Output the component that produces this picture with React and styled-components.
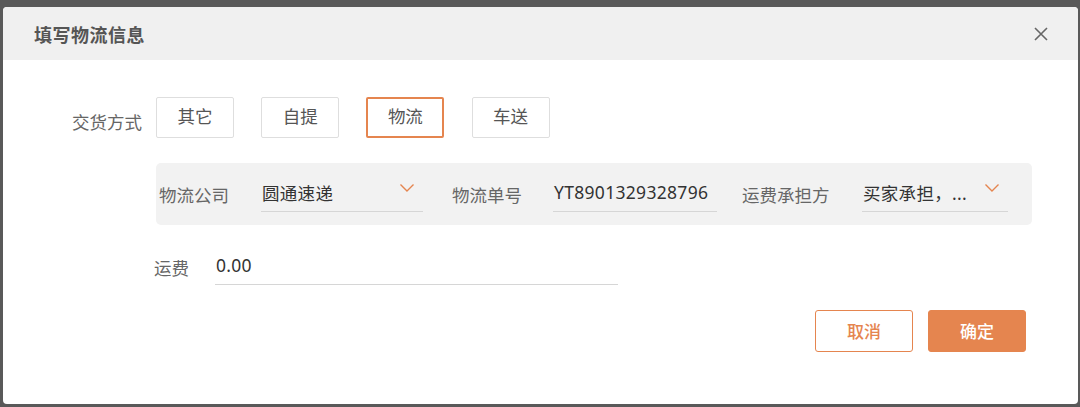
import React from "react";
import styled, { createGlobalStyle } from "styled-components";

const Global = createGlobalStyle`
  html, body { margin: 0; padding: 0; }
  body {
    background: #595959;
    font-family: "Noto Sans", "Noto Sans CJK SC", sans-serif;
    width: 1080px; height: 407px; overflow: hidden;
  }
`;

const ORANGE = "#e5854f";

const Dialog = styled.div`
  margin: 7px 0 0 3px;
  width: 1075px;
  height: 397px;
  background: #fff;
  border-radius: 4px;
  overflow: hidden;
  display: flex;
  flex-direction: column;
`;

const Header = styled.div`
  height: 53px;
  flex: none;
  background: #f0f0f0;
  display: flex;
  align-items: center;
  justify-content: space-between;
  padding: 0 28px 0 31px;
`;

const Title = styled.div`
  font-size: 18px;
  font-weight: 600;
  color: #555;
  letter-spacing: 0.5px;
`;

const Close = styled.button`
  border: none;
  background: none;
  padding: 0;
  width: 18px;
  height: 18px;
  display: flex;
  align-items: center;
  justify-content: center;
  cursor: pointer;
`;

const Body = styled.div`
  display: flex;
  flex-direction: column;
  padding-top: 37px;
`;

const Row = styled.div`
  display: flex;
  align-items: center;
  padding-left: ${(p) => p.$indent}px;
  margin-top: ${(p) => p.$top || 0}px;
`;

const Label = styled.span`
  font-size: 17.5px;
  color: #666;
  width: ${(p) => (p.$w ? `${p.$w}px` : "auto")};
  flex: none;
  margin-top: ${(p) => p.$dy || 0}px;
  white-space: nowrap;
`;

const Options = styled.div`
  display: flex;
  gap: 27.2px;
  margin-left: 14px;
`;

const Option = styled.button`
  width: 78px;
  height: 41px;
  box-sizing: border-box;
  background: #fff;
  border: ${(p) => (p.$active ? `2px solid ${ORANGE}` : "1px solid #dedede")};
  border-radius: 2px;
  font-family: inherit;
  font-size: 17.5px;
  color: #555;
  padding: 0;
  padding-bottom: 4px;
`;

const Panel = styled.div`
  margin: 25px 0 0 153px;
  width: 876px;
  height: 62px;
  background: #f2f2f2;
  border-radius: 5px;
  display: flex;
  align-items: center;
  padding-left: 3px;
  box-sizing: border-box;
`;

const Field = styled.div`
  width: ${(p) => p.$w}px;
  height: 35px;
  box-sizing: border-box;
  border-bottom: 1px solid #d6d6d6;
  display: flex;
  align-items: center;
  justify-content: space-between;
  padding: 0 8px 4px 1px;
  margin-right: ${(p) => p.$mr || 0}px;
  margin-top: 1px;
  flex: none;
`;

const Value = styled.span`
  font-size: 17.5px;
  letter-spacing: 0.3px;
  color: #333;
  white-space: nowrap;
`;

const Chevron = () => (
  <svg width="16" height="10" viewBox="0 0 16 10" style={{ marginTop: -8 }}>
    <path d="M1.5 1.5 L8 8 L14.5 1.5" fill="none" stroke={ORANGE} strokeWidth="1.4" />
  </svg>
);

const Actions = styled.div`
  display: flex;
  justify-content: flex-end;
  gap: 15px;
  padding-right: 52px;
  margin-top: 25px;
`;

const ActionButton = styled.button`
  width: 98px;
  height: 42px;
  box-sizing: border-box;
  border-radius: 3px;
  font-family: inherit;
  font-size: 17px;
  font-weight: 500;
  border: 1px solid ${ORANGE};
  background: ${(p) => (p.$primary ? ORANGE : "#fff")};
  color: ${(p) => (p.$primary ? "#fff" : ORANGE)};
  padding: 0 0 2px;
`;

export default function App() {
  return (
    <>
      <Global />
      <Dialog>
        <Header>
          <Title>填写物流信息</Title>
          <Close aria-label="close">
            <svg width="14" height="14" viewBox="0 0 14 14">
              <path d="M1 1 L13 13 M13 1 L1 13" stroke="#666" strokeWidth="1.6" />
            </svg>
          </Close>
        </Header>
        <Body>
          <Row $indent={69}>
            <Label $dy={8}>交货方式</Label>
            <Options>
              <Option>其它</Option>
              <Option>自提</Option>
              <Option $active>物流</Option>
              <Option>车送</Option>
            </Options>
          </Row>
          <Panel>
            <Label $w={102}>物流公司</Label>
            <Field $w={162} $mr={29}>
              <Value>圆通速递</Value>
              <Chevron />
            </Field>
            <Label $w={101}>物流单号</Label>
            <Field $w={164} $mr={25}>
              <Value>YT8901329328796</Value>
            </Field>
            <Label $w={120}>运费承担方</Label>
            <Field $w={146}>
              <Value>买家承担，...</Value>
              <Chevron />
            </Field>
          </Panel>
          <Row $indent={151} $top={24}>
            <Label $w={61}>运费</Label>
            <Field $w={403}>
              <Value>0.00</Value>
            </Field>
          </Row>
          <Actions>
            <ActionButton>取消</ActionButton>
            <ActionButton $primary>确定</ActionButton>
          </Actions>
        </Body>
      </Dialog>
    </>
  );
}
